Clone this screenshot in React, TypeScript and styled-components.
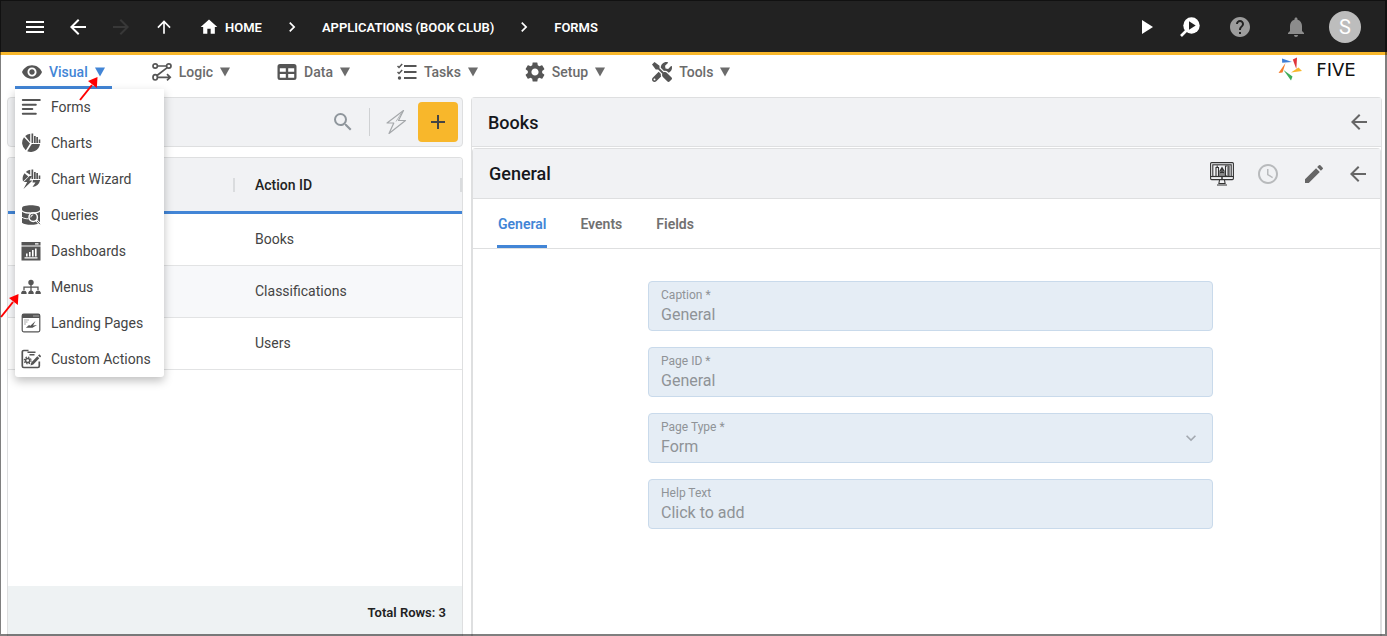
import React from 'react';
import styled, { createGlobalStyle } from 'styled-components';
import {
  MdMenu, MdArrowBack, MdArrowForward, MdArrowUpward, MdHome, MdChevronRight, MdPlayArrow,
  MdHelp, MdNotifications, MdVisibility, MdSettings, MdSearch, MdAdd, MdAccessTime, MdEdit,
  MdKeyboardArrowDown,
} from 'react-icons/md';
import { FaTools } from 'react-icons/fa';

const c = {
  bar: '#222222',
  yellow: '#f8b72b',
  blue: '#4285d6',
  icon: '#555555',
  line: '#dedfe0',
  panel: '#f1f2f4',
  text: '#444444',
};

const Global = createGlobalStyle`
  *, *::before, *::after { box-sizing: border-box; }
  body { margin: 0; background: #fff; font-family: Roboto, "Liberation Sans", sans-serif; font-size: 14px; color: ${c.text}; }
  button { font: inherit; color: inherit; background: none; border: 0; padding: 0; cursor: pointer; }
  svg { display: block; flex: none; }
`;

const Shell = styled.div`
  position: relative;
  min-height: 100vh;
  display: flex;
  flex-direction: column;
`;

const Frame = styled.div`
  position: absolute;
  inset: 0;
  z-index: 20;
  pointer-events: none;
  border: 1px solid rgba(0, 0, 0, 0.5);
  border-right-width: 2px;
  border-bottom-width: 2px;
`;

const TopBar = styled.header`
  display: flex;
  align-items: center;
  height: 55px;
  padding: 2px 26px 0 15px;
  background: ${c.bar};
  border-bottom: 3px solid ${c.yellow};
  color: #fff;
`;

const IconButton = styled.button<{ $size?: number; $color?: string }>`
  display: flex;
  align-items: center;
  justify-content: center;
  width: ${p => p.$size ?? 40}px;
  height: ${p => p.$size ?? 40}px;
  color: ${p => p.$color ?? 'inherit'};
`;

const NavButtons = styled.div`
  display: flex;
  gap: 3px;
  margin-right: 15px;
`;

const Crumbs = styled.nav`
  display: flex;
  align-items: center;
  gap: 20px;
  font-size: 13px;
  font-weight: 600;
`;

const Crumb = styled.a`
  display: flex;
  align-items: center;
  gap: 6px;
  color: #fff;
  text-decoration: none;
  white-space: nowrap;
`;

const TopActions = styled.div`
  display: flex;
  align-items: center;
  margin-left: auto;
`;

const ActionSlot = styled.div<{ $gap: number }>`
  margin-left: ${p => p.$gap}px;
`;

const Avatar = styled.button`
  width: 32px;
  height: 32px;
  margin-left: 21px;
  border-radius: 50%;
  background: #bdbdbd;
  color: #fff;
  font-size: 20px;
  line-height: 32px;
`;

const MenuBar = styled.nav`
  position: relative;
  display: flex;
  gap: 33px;
  height: 34px;
  padding: 0 22px 0 15px;
`;

const MenuTab = styled.button<{ $active?: boolean }>`
  display: flex;
  align-items: center;
  gap: 7px;
  padding: 3px 7px 0;
  font-size: 14px;
  font-weight: 500;
  color: ${p => (p.$active ? c.blue : '#6b6b6b')};
  border-bottom: 3px solid ${p => (p.$active ? c.blue : 'transparent')};
  border-radius: 2px 2px 0 0;
  > svg:first-child { color: ${c.icon}; }
`;

const Logo = styled.a`
  display: flex;
  align-items: center;
  gap: 4px;
  height: 28px;
  margin-left: auto;
  color: #111;
  text-decoration: none;
  font: 18px "DejaVu Sans", sans-serif;
`;

const WordMark = styled.span`
  width: 58px;
  text-align: center;
`;

const DropMenu = styled.ul`
  position: absolute;
  top: 34px;
  left: 15px;
  z-index: 5;
  margin: 0;
  padding: 0;
  list-style: none;
  background: #fff;
  border-radius: 0 0 3px 3px;
  box-shadow: 0 4px 10px rgba(0, 0, 0, 0.25);
`;

const DropItem = styled.button`
  display: flex;
  align-items: center;
  gap: 10px;
  width: 149px;
  height: 36px;
  padding: 0 6px;
  white-space: nowrap;
  > svg { color: ${c.icon}; }
`;

const Main = styled.main`
  flex: 1;
  display: grid;
  grid-template-columns: minmax(0, 456fr) minmax(0, 911fr);
  gap: 8px;
  padding: 8px 5px 0 7px;
`;

const ListColumn = styled.section`
  display: flex;
  flex-direction: column;
  gap: 10px;
`;

const SearchBar = styled.div`
  display: flex;
  align-items: center;
  height: 50px;
  padding: 0 4px 0 16px;
  background: ${c.panel};
  border: 1px solid ${c.line};
  border-radius: 4px;
`;

const SearchInput = styled.input`
  flex: 1;
  min-width: 0;
  height: 40px;
  border: 0;
  outline: 0;
  background: transparent;
  font: inherit;
`;

const Divider = styled.span`
  width: 1px;
  height: 28px;
  margin: 0 6px;
  background: #cfd1d3;
`;

const AddButton = styled(IconButton)`
  margin-left: 2px;
  background: ${c.yellow};
  border-radius: 4px;
`;

const TableCard = styled.div`
  flex: 1;
  display: flex;
  flex-direction: column;
  border: 1px solid ${c.line};
  border-bottom: 0;
  border-radius: 4px 4px 0 0;
  overflow: hidden;
`;

const Table = styled.table`
  width: 100%;
  border-collapse: separate;
  border-spacing: 0;
  table-layout: fixed;
`;

const HeadCell = styled.th`
  height: 56px;
  padding: 0 0 0 20px;
  text-align: left;
  font-weight: 500;
  color: #222;
  background:
    linear-gradient(#dadcde, #dadcde) right 20px / 2px 14px no-repeat,
    ${c.panel};
  border-bottom: 3px solid ${c.blue};
`;

const Cell = styled.td`
  height: 52px;
  padding: 0 20px 2px;
  border-bottom: 1px solid #e2e3e4;
`;

const Row = styled.tr<{ $shade?: boolean }>`
  background: ${p => (p.$shade ? '#f7f8fa' : '#fff')};
`;

const TableFoot = styled.div`
  display: flex;
  align-items: center;
  justify-content: flex-end;
  height: 50px;
  margin-top: auto;
  padding: 2px 16px 0 0;
  background: #eef2f3;
  color: #222;
  font-size: 13px;
  font-weight: 600;
`;

const Detail = styled.section`
  display: flex;
  flex-direction: column;
  border: 1px solid ${c.line};
  border-bottom: 0;
  border-radius: 4px 4px 0 0;
`;

const DetailHead = styled.div<{ $height: number }>`
  display: flex;
  align-items: center;
  gap: 4px;
  height: ${p => p.$height}px;
  padding: 0 2px 0 16px;
  background: ${c.panel};
  border-bottom: 1px solid ${c.line};
`;

const Title = styled.h2`
  margin: 0 auto 0 0;
  font-size: 18px;
  font-weight: 500;
  color: #16181c;
`;

const PageCard = styled.div`
  flex: 1;
  margin-top: 1px;
  border: 1px solid ${c.line};
  border-bottom: 0;
  border-radius: 4px 4px 0 0;
`;

const HeadActions = styled.div`
  display: flex;
  gap: 6px;
`;

const Tabs = styled.div`
  display: flex;
  gap: 32px;
  height: 50px;
  padding: 0 24px;
  border-bottom: 1px solid ${c.line};
`;

const Tab = styled.button<{ $active?: boolean }>`
  padding: 3px 1px 0;
  font-weight: 600;
  color: ${p => (p.$active ? c.blue : '#717171')};
  border-bottom: 3px solid ${p => (p.$active ? c.blue : 'transparent')};
  border-radius: 2px 2px 0 0;
`;

const Form = styled.form`
  display: grid;
  gap: 16px;
  margin: 32px 18.4% 0 19.3%;
`;

const FieldBox = styled.label`
  position: relative;
  display: flex;
  flex-direction: column;
  height: 50px;
  padding: 6px 12px 0;
  background: #e5edf5;
  border: 1px solid #c9daeb;
  border-radius: 4px;
  color: #8f9397;
  font-size: 12px;
  line-height: 14px;
`;

const Value = styled.input`
  width: 100%;
  height: 26px;
  padding: 0;
  border: 0;
  outline: 0;
  background: transparent;
  color: #8f9397;
  font: 16px/26px Roboto, sans-serif;
  &::placeholder { color: #8f9397; opacity: 1; }
`;

const Select = styled.select`
  width: 100%;
  height: 26px;
  padding: 0;
  border: 0;
  outline: 0;
  appearance: none;
  background: transparent;
  color: #8f9397;
  font: 16px/26px Roboto, sans-serif;
`;

const SelectArrow = styled.span`
  position: absolute;
  right: 11px;
  top: 14px;
  color: #a3a9b0;
`;

const Pointer = styled.svg<{ $x: number; $y: number }>`
  position: absolute;
  left: ${p => p.$x}px;
  top: ${p => p.$y}px;
  z-index: 10;
  pointer-events: none;
`;

const RedArrow = ({ x, y }: { x: number; y: number }) => (
  <Pointer $x={x} $y={y} width="20" height="25" viewBox="0 0 20 25" aria-hidden="true">
    <path d="M1 23 13 8" stroke="#f00" strokeWidth="2" fill="none" />
    <path d="M18.500 0 9 4 17.800 11z" fill="#f00" />
  </Pointer>
);

const Caret = () => (
  <svg width="10" height="10" viewBox="0 0 10 10" aria-hidden="true">
    <path d="M0 .5h10L5 9.500z" fill="currentColor" />
  </svg>
);

const Glyph = ({ children, size = 20 }: { children: React.ReactNode; size?: number }) => (
  <svg width={size} height={size} viewBox="0 0 20 20" fill="currentColor" aria-hidden="true">{children}</svg>
);

const LogicIcon = () => (
  <Glyph>
    <g fill="none" stroke="currentColor" strokeWidth="1.700">
      <circle cx="3.200" cy="4" r="2.200" />
      <circle cx="16.800" cy="4" r="2.200" />
      <ellipse cx="3.200" cy="15.300" rx="2.200" ry="2.700" />
      <path d="M5.400 4h9.200M15.200 5.600 5 13.500M5.400 15.300H18M15 12.200l3.200 3.100-3.200 3.100" />
    </g>
  </Glyph>
);

const DataIcon = () => (
  <Glyph>
    <path fillRule="evenodd" d="M3 2h14a2.500 2.500 0 0 1 2.500 2.500v11A2.500 2.500 0 0 1 17 18H3a2.500 2.500 0 0 1-2.500-2.500v-11A2.500 2.500 0 0 1 3 2zM2.800 6.200v3.600h6V6.200zm8.400 0v3.600h6V6.200zM2.800 12v3.800h6V12zm8.400 0v3.800h6V12z" />
  </Glyph>
);

const TasksIcon = () => (
  <Glyph>
    <path d="M7 3h12.500v2H7zM7 9h12.500v2H7zM7 15h12.500v2H7z" />
    <circle cx="2.500" cy="16" r="1.700" />
    <path d="M.5 4 2 5.500 5.200 2M.5 10 2 11.500 5.200 8" fill="none" stroke="currentColor" strokeWidth="1.500" />
  </Glyph>
);

const FormsIcon = () => (
  <Glyph>
    <path d="M1.800 3h17M1.800 7.700h13M1.800 12h9.500M1.800 16.700h13" stroke="currentColor" strokeWidth="2" strokeLinecap="round" />
  </Glyph>
);

const ChartsIcon = () => (
  <Glyph>
    <path d="M4.200 3A9.200 9.200 0 0 1 9.200.7v8.500zM3 4.300l6 6.200-4.200 6.700A9.200 9.200 0 0 1 3 4.300z" />
    <path d="M6.200 18.200 10.800 11H19a9.200 9.200 0 0 1-12.800 7.200z" />
    <path d="M10.500.6h1.700V10h-1.700zM13 3h1.700v7H13zM15.300 4h1.700v6h-1.700zM17.700 6.500h1.600V10h-1.600z" />
  </Glyph>
);

const WizardIcon = () => (
  <Glyph>
    <path d="M4.800 3A9.200 9.200 0 0 1 9.200.7v5zM3.500 4.200l3.800 3.300L2 12.500a9.200 9.200 0 0 1 1.500-8.300z" />
    <path d="M10.500.6h1.700V10h-1.700zM13 3h1.700v7H13zM15.300 4h1.700v6h-1.700zM17.700 6.500h1.600V10h-1.600zM12 11h7.200a9.200 9.200 0 0 1-7.700 7l3-4.500h-3z" />
    <path d="M8.500 7 2.800 13h3.400L2.500 20l9-8.500H8.300L11 7z" />
  </Glyph>
);

const QueriesIcon = () => (
  <Glyph>
    <path d="M1 3.200C1 1.200 5 .3 10 .3s9 .9 9 2.900v1.300c0 2-4 2.900-9 2.900s-9-.9-9-2.900z" />
    <path d="M1 6.800c2 1.700 5.500 2.100 9 2.100s7-.4 9-2.100v11c-2 1.600-5 2-9 2s-7-.4-9-2z" />
    <path d="M1 12.300c2 1.200 4 1.500 6.500 1.500" stroke="#fff" fill="none" />
    <circle cx="12.200" cy="12.200" r="4.200" fill="currentColor" stroke="#fff" strokeWidth="1.500" />
    <path d="m15 15 4 4.200" stroke="#fff" strokeWidth="2.400" />
    <path d="m16 16 3 3.200" stroke="currentColor" />
    <path d="M9.800 12.400a2.500 2.500 0 0 1 2.400-2.500" stroke="#fff" fill="none" />
  </Glyph>
);

const DashboardsIcon = () => (
  <Glyph>
    <path d="M.5 1h19v3.500H.5zM.5 5.600h19V19.500H.5z" />
    <path d="M14 2.200h3.500v1.200H14zM3.500 16.200h13v1.200h-13zM5 12.500h1.600v3H5zM8 11h1.600v4.500H8zM11 9h1.600v6.500H11zM14 7.500h1.600v8H14z" fill="#fff" />
  </Glyph>
);

const MenusIcon = () => (
  <Glyph>
    <path d="M10 5v9M3 13v-2.800h14V13" fill="none" stroke="currentColor" strokeWidth="1.300" />
    <circle cx="10" cy="5.500" r="2.700" />
    <path d="M.2 17v-1.400a2.800 2.800 0 0 1 5.400 0V17zM7.300 17v-1.400a2.800 2.800 0 0 1 5.400 0V17zM14.400 17v-1.400a2.800 2.800 0 0 1 5.400 0V17z" />
  </Glyph>
);

const LandingIcon = () => (
  <Glyph>
    <rect x="1.200" y="1.200" width="17.600" height="17.600" rx="1.500" fill="none" stroke="currentColor" strokeWidth="1.200" />
    <path d="M1 1h18v4H1z" />
    <path d="M12.500 3h1M14.500 3h1M16.500 3h1" stroke="#fff" />
    <path d="M3 7h5M3 9h3.500M3 11h2" stroke="currentColor" strokeOpacity=".5" />
    <path d="M5 14.500c1.500-.5 1.500-2 3.500-2.500l.5 1 5.500-5-2.500 4.500 4-.5-4.500 2.800H5z" />
  </Glyph>
);

const CustomIcon = () => (
  <Glyph>
    <path d="M7.500 1.500H2.800a1.500 1.500 0 0 0-1.500 1.500v14a1.500 1.500 0 0 0 1.500 1.500h14a1.500 1.500 0 0 0 1.500-1.500v-4.500" fill="none" stroke="currentColor" strokeWidth="1.700" />
    <path d="M6.500 3.300h8M8.500 5.800h5" stroke="currentColor" strokeWidth="1.500" />
    <circle cx="6.700" cy="11.500" r="2.100" fill="none" stroke="currentColor" strokeWidth="1.500" />
    <circle cx="6.700" cy="11.500" r="3.400" fill="none" stroke="currentColor" strokeWidth="1.200" strokeDasharray="1.400 1.270" />
    <path d="m9.500 16.500.8-3 6-6.200 2 2-6 6.200zM17 6.500l1.300-1.300 2 2L19 8.500z" />
  </Glyph>
);

const InspectIcon = () => (
  <Glyph size={20}>
    <circle cx="11.500" cy="8.500" r="8.200" />
    <path d="M7 13 1 19" stroke="currentColor" strokeWidth="2.600" />
    <path d="M9 4.300v8.400l6.700-4.200z" fill={c.bar} />
  </Glyph>
);

const BoltIcon = () => (
  <svg width="22" height="26" viewBox="0 0 22 26" fill="none" stroke="#a5a8ab" strokeWidth="1.200" strokeLinejoin="round" aria-hidden="true">
    <path d="M18.500 1.500 2 14h6.800L4 24.500 20.500 11.500h-7z" />
    <path d="M16.500 4 11 12.500" strokeWidth=".8" />
  </svg>
);

const MonitorIcon = () => (
  <svg width="24" height="24" viewBox="0 0 24 24" fill="none" stroke="#333" strokeWidth="1.100" aria-hidden="true">
    <rect x=".6" y=".6" width="22.800" height="17" rx="1" />
    <path d="M.6 14.500h22.800" />
    <rect x="2.800" y="2.800" width="18.400" height="11.700" />
    <path d="M6 14V5.500h2.500V14M7.200 3.500v2M15.500 4h3.500v10h-3.500zM17 6h2M17 8h2M17 10h2M17 12h2M10 14V9l2-3.500L14 9v5M12 5.500V14M10 8l4 3M14 8l-4 3" />
    <path d="M9.500 18 8.800 22M14.500 18l.7 4M7 23h10M8.500 21.500h7" />
    <path d="M11 16h2" strokeWidth="1.500" />
  </svg>
);

const FiveMark = () => (
  <svg width="25" height="24" viewBox="0 0 25 24" aria-hidden="true">
    <path d="M4 1.500 14 5 4.200 5.800z" fill="#3f7fd6" />
    <path d="M14.800 2.500 19 .5 18.300 12z" fill="#e0343a" />
    <path d="M13 15.500 20.500 10.500 24 14z" fill="#f8b72b" />
    <path d="M5.500 13 14.500 19.500 13 23.500z" fill="#3fae5a" />
    <path d="M7.500 6 4.500 15.500 .5 16z" fill="#f47b2a" />
  </svg>
);

const menuTabs = [
  { label: 'Visual', icon: <MdVisibility size={20} viewBox="1 1 22 22" />, active: true },
  { label: 'Logic', icon: <LogicIcon /> },
  { label: 'Data', icon: <DataIcon /> },
  { label: 'Tasks', icon: <TasksIcon /> },
  { label: 'Setup', icon: <MdSettings size={20} viewBox="2 2 20 20" /> },
  { label: 'Tools', icon: <FaTools size={20} /> },
];

const visualItems = [
  { label: 'Forms', icon: <FormsIcon /> },
  { label: 'Charts', icon: <ChartsIcon /> },
  { label: 'Chart Wizard', icon: <WizardIcon /> },
  { label: 'Queries', icon: <QueriesIcon /> },
  { label: 'Dashboards', icon: <DashboardsIcon /> },
  { label: 'Menus', icon: <MenusIcon /> },
  { label: 'Landing Pages', icon: <LandingIcon /> },
  { label: 'Custom Actions', icon: <CustomIcon /> },
];

export default function App() {
  return (
    <Shell>
      <Global />
      <TopBar>
        <NavButtons>
          <IconButton aria-label="Menu"><MdMenu size={24} /></IconButton>
          <IconButton aria-label="Back"><MdArrowBack size={24} /></IconButton>
          <IconButton aria-label="Forward" $color="#383838"><MdArrowForward size={24} /></IconButton>
          <IconButton aria-label="Up"><MdArrowUpward size={20} /></IconButton>
        </NavButtons>
        <Crumbs aria-label="Breadcrumb">
          <Crumb href="#home"><MdHome size={20} />HOME</Crumb>
          <MdChevronRight size={20} />
          <Crumb href="#applications">APPLICATIONS (BOOK CLUB)</Crumb>
          <MdChevronRight size={20} />
          <Crumb href="#forms">FORMS</Crumb>
        </Crumbs>
        <TopActions>
          <IconButton $size={24} aria-label="Run"><MdPlayArrow size={24} /></IconButton>
          <ActionSlot $gap={20}><IconButton $size={24} aria-label="Inspect"><InspectIcon /></IconButton></ActionSlot>
          <ActionSlot $gap={26}><IconButton $size={24} $color="#9c9c9c" aria-label="Help"><MdHelp size={24} /></IconButton></ActionSlot>
          <ActionSlot $gap={32}><IconButton $size={24} $color="#8c8c8c" aria-label="Notifications"><MdNotifications size={24} /></IconButton></ActionSlot>
          <Avatar>S</Avatar>
        </TopActions>
      </TopBar>

      <MenuBar>
        {menuTabs.map(t => (
          <MenuTab key={t.label} $active={t.active}>{t.icon}{t.label}<Caret /></MenuTab>
        ))}
        <Logo href="#five"><FiveMark /><WordMark>FIVE</WordMark></Logo>
        <DropMenu>
          {visualItems.map(i => (
            <li key={i.label}><DropItem>{i.icon}{i.label}</DropItem></li>
          ))}
        </DropMenu>
      </MenuBar>

      <Main>
        <ListColumn>
          <SearchBar>
            <SearchInput type="text" aria-label="Search" />
            <IconButton aria-label="Search" $color="#8f969c"><MdSearch size={24} /></IconButton>
            <Divider />
            <IconButton aria-label="Quick actions"><BoltIcon /></IconButton>
            <AddButton aria-label="Add"><MdAdd size={24} /></AddButton>
          </SearchBar>
          <TableCard>
            <Table>
              <thead>
                <tr><HeadCell /><HeadCell>Action ID</HeadCell></tr>
              </thead>
              <tbody>
                {['Books', 'Classifications', 'Users'].map((name, i) => (
                  <Row key={name} $shade={i % 2 === 1}><Cell /><Cell>{name}</Cell></Row>
                ))}
              </tbody>
            </Table>
            <TableFoot>Total Rows: 3</TableFoot>
          </TableCard>
        </ListColumn>

        <Detail>
          <DetailHead $height={49}>
            <Title>Books</Title>
            <IconButton aria-label="Close Books" $color="#666"><MdArrowBack size={24} /></IconButton>
          </DetailHead>
          <PageCard>
            <DetailHead $height={50}>
              <Title>General</Title>
              <HeadActions>
                <IconButton aria-label="Preview"><MonitorIcon /></IconButton>
                <IconButton aria-label="History" $color="#b8babc"><MdAccessTime size={24} /></IconButton>
                <IconButton aria-label="Edit" $color="#666"><MdEdit size={24} /></IconButton>
              </HeadActions>
              <IconButton aria-label="Back" $color="#666"><MdArrowBack size={24} /></IconButton>
            </DetailHead>
            <Tabs>
              <Tab $active>General</Tab>
              <Tab>Events</Tab>
              <Tab>Fields</Tab>
            </Tabs>
            <Form>
              <FieldBox>Caption *<Value defaultValue="General" /></FieldBox>
              <FieldBox>Page ID *<Value defaultValue="General" /></FieldBox>
              <FieldBox>
                Page Type *
                <Select defaultValue="Form"><option>Form</option></Select>
                <SelectArrow><MdKeyboardArrowDown size={20} /></SelectArrow>
              </FieldBox>
              <FieldBox>Help Text<Value placeholder="Click to add" /></FieldBox>
            </Form>
          </PageCard>
        </Detail>
      </Main>

      <RedArrow x={79} y={77} />
      <RedArrow x={0} y={294} />
      <Frame />
    </Shell>
  );
}
